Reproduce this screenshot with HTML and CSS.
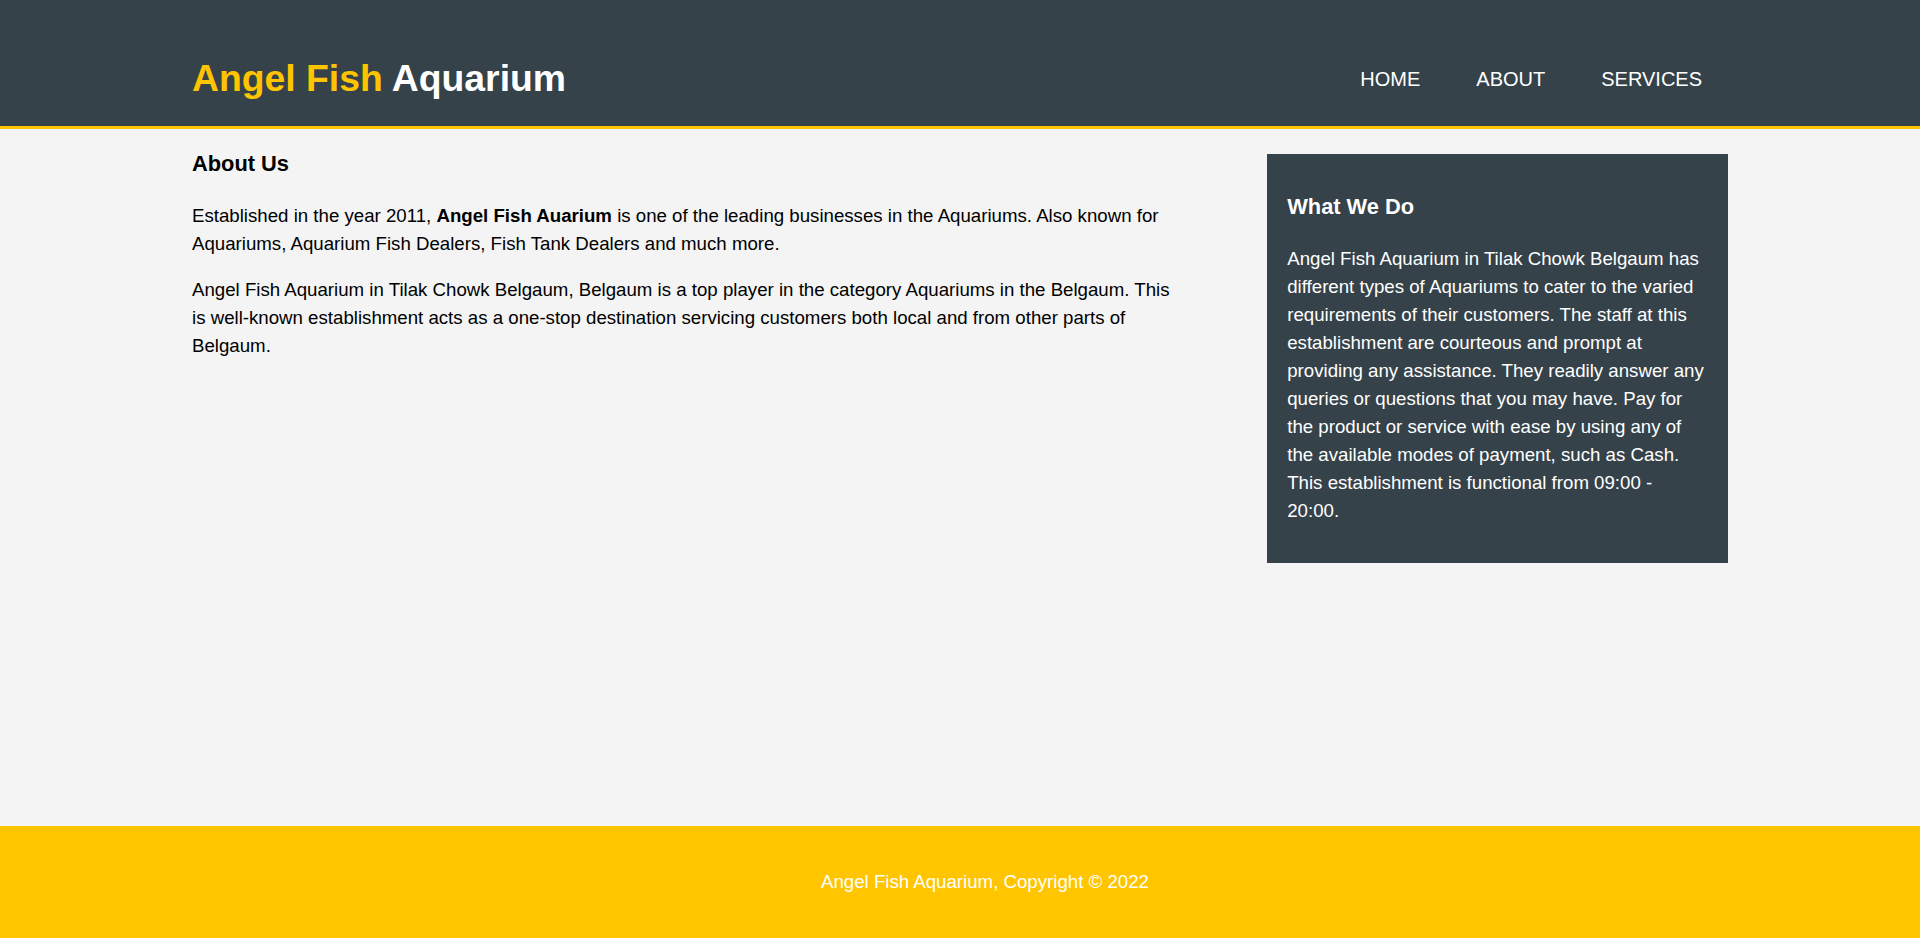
FILE: index.html
```html
<!DOCTYPE html>
<html lang="en">
<head>
<meta charset="utf-8">
<title>Angel Fish Aquarium | About</title>
<link rel="stylesheet" href="styles.css">
</head>
<body>
<header class="site-header">
  <div class="container header-inner">
    <h1 class="logo"><span class="highlight">Angel Fish</span> Aquarium</h1>
    <nav class="nav">
      <a href="#" class="nav-link">HOME</a>
      <a href="#" class="nav-link">ABOUT</a>
      <a href="#" class="nav-link">SERVICES</a>
    </nav>
  </div>
</header>

<main class="page">
  <div class="container content">
    <article class="main-col">
      <h3 class="page-title">About Us</h3>
      <p>Established in the year 2011, <strong>Angel Fish Auarium</strong> is one of the leading businesses in the Aquariums. Also known for Aquariums, Aquarium Fish Dealers, Fish Tank Dealers and much more.</p>
      <p>Angel Fish Aquarium in Tilak Chowk Belgaum, Belgaum is a top player in the category Aquariums in the Belgaum. This is well-known establishment acts as a one-stop destination servicing customers both local and from other parts of Belgaum.</p>
    </article>
    <aside class="sidebar">
      <div class="dark">
        <h3 class="side-title">What We Do</h3>
        <p>Angel Fish Aquarium in Tilak Chowk Belgaum has different types of Aquariums to cater to the varied requirements of their customers. The staff at this establishment are courteous and prompt at providing any assistance. They readily answer any queries or questions that you may have. Pay for the product or service with ease by using any of the available modes of payment, such as Cash. This establishment is functional from 09:00 - 20:00.</p>
      </div>
    </aside>
  </div>
</main>

<footer class="site-footer">
  <p class="copyright">Angel Fish Aquarium, Copyright &copy; 2022</p>
</footer>
</body>
</html>
```

FILE: styles.css
```css
* {
  box-sizing: border-box;
}

html, body {
  margin: 0;
  padding: 0;
}

body {
  font-family: "Liberation Sans", Arial, Helvetica, sans-serif;
  font-size: 14pt;
  line-height: 1.5;
  background: #f4f4f4;
  color: #000;
  min-height: 100vh;
  display: flex;
  flex-direction: column;
}

.container {
  width: 80%;
  margin: 0 auto;
}

/* Header */
.site-header {
  background: #35424a;
  border-bottom: 3px solid #ffc400;
  height: 129px;
  color: #fff;
}

.header-inner {
  display: flex;
  justify-content: space-between;
  align-items: flex-start;
  padding-top: 50px;
}

.logo {
  margin: 0;
  font-size: 2em;
  font-weight: bold;
  line-height: 56px;
  color: #fff;
}

.highlight {
  color: #ffc400;
}

.nav {
  display: flex;
  gap: 56px;
  margin-top: 14px;
  margin-right: 26px;
}

.nav-link {
  color: #fff;
  text-decoration: none;
  font-size: 20px;
  line-height: 30px;
}

/* Content */
.page {
  flex: 1;
}

.content {
  display: flex;
  justify-content: space-between;
  align-items: flex-start;
}

.main-col {
  width: 64%;
}

.page-title {
  font-size: 1.17em;
  margin: 19px 0 21px;
}

.main-col p {
  margin: 0 0 1em;
}

.sidebar {
  width: 30%;
  margin-top: 25px;
}

.dark {
  background: #35424a;
  color: #fff;
  padding: 15px 20px 19px;
}

.side-title {
  font-size: 1.17em;
  margin: 1em 0;
}

.dark p {
  margin: 0 0 1em;
}

/* Footer */
.site-footer {
  background: #ffc600;
  color: #fff;
  height: 112px;
  display: flex;
  align-items: center;
  justify-content: center;
  padding-left: 50px;
}

.copyright {
  margin: 0;
}
```
